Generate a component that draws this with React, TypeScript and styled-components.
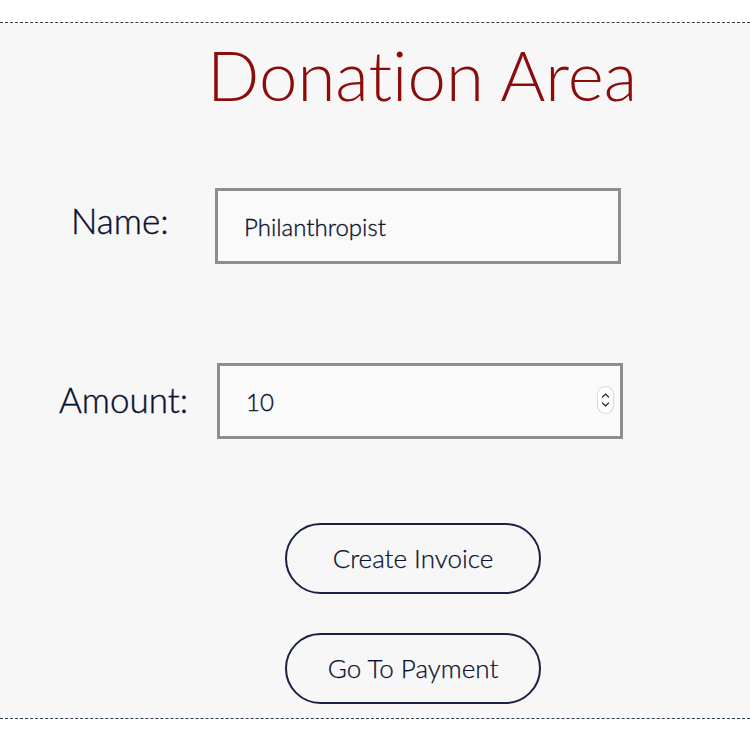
import React from "react";
import styled, { createGlobalStyle } from "styled-components";

const Global = createGlobalStyle`
  html, body { margin: 0; padding: 0; background: #ffffff; }
  body { font-family: "Lato", "Liberation Sans", sans-serif; }
  * { box-sizing: border-box; }
`;

const Section = styled.section`
  margin-top: 22px;
  height: 697px;
  background: #f7f7f7;
  border-top: 1px dashed #2f4050;
  border-bottom: 1px dashed #2f4050;
  display: flex;
  flex-direction: column;
`;

const Title = styled.h1`
  margin: 7px 0 0 207px;
  font-family: "Lato", sans-serif;
  font-weight: 300;
  font-size: 69px;
  line-height: 90px;
  color: #8c0c0c;
  font-variant-ligatures: none;
  font-feature-settings: "liga" 0;
`;

const Row = styled.div<{ $top: number }>`
  display: flex;
  align-items: center;
  margin-top: ${(p) => p.$top}px;
  height: 76px;
`;

const Label = styled.label<{ $left: number; $width: number; $lift: number }>`
  margin-left: ${(p) => p.$left}px;
  width: ${(p) => p.$width}px;
  font-family: "Lato", sans-serif;
  font-size: 35px;
  font-weight: 300;
  color: #0b1033;
  padding-bottom: ${(p) => p.$lift}px;
  -webkit-text-stroke: 0.4px #0b1033;
`;

const Field = styled.div`
  position: relative;
  width: 406px;
  height: 76px;
`;

const Input = styled.input`
  width: 100%;
  height: 100%;
  border: 3px solid #8e8e8e;
  background: #fafafa;
  padding: 0 0 0 26px;
  font-family: "Lato", sans-serif;
  font-size: 24px;
  font-weight: 300;
  color: #0b1030;
  -webkit-text-stroke: 0.35px #0b1030;
  outline: none;
  appearance: textfield;
  -moz-appearance: textfield;
  &::-webkit-outer-spin-button,
  &::-webkit-inner-spin-button {
    -webkit-appearance: none;
    margin: 0;
  }
`;

const Spinner = styled.div`
  position: absolute;
  right: 10px;
  top: 24px;
  width: 15px;
  height: 26px;
  border-radius: 8px;
  background: #ffffff;
  box-shadow: 0 0 0 1px #d8d8d8;
  display: flex;
  align-items: center;
  justify-content: center;
`;

const Buttons = styled.div`
  display: flex;
  flex-direction: column;
  align-items: flex-start;
  margin-left: 285px;
  margin-top: 84px;
  gap: 39px;
`;

const PillButton = styled.button`
  width: 256px;
  height: 71px;
  border-radius: 36px;
  border: 2px solid #1a2142;
  background: #f7f7f7;
  font-family: "Lato", sans-serif;
  font-size: 26px;
  font-weight: 300;
  color: #0b1030;
  -webkit-text-stroke: 0.25px #0b1030;
  padding: 0 0 2px 0;
  cursor: pointer;
`;

export default function App() {
  return (
    <>
      <Global />
      <Section>
        <Title>Donation Area</Title>
        <Row $top={68}>
          <Label $left={71} $width={144} $lift={12}>Name:</Label>
          <Field>
            <Input type="text" defaultValue="Philanthropist" />
          </Field>
        </Row>
        <Row $top={99}>
          <Label $left={59} $width={158} $lift={4}>Amount:</Label>
          <Field>
            <Input type="number" defaultValue={10} />
            <Spinner>
              <svg width="9" height="18" viewBox="0 0 9 18" fill="none" stroke="#333" strokeWidth="1.3" strokeLinecap="round" strokeLinejoin="round">
                <path d="M1.5 6 L4.5 3 L7.5 6" />
                <path d="M1.5 12 L4.5 15 L7.5 12" />
              </svg>
            </Spinner>
          </Field>
        </Row>
        <Buttons>
          <PillButton type="button">Create Invoice</PillButton>
          <PillButton type="button">Go To Payment</PillButton>
        </Buttons>
      </Section>
    </>
  );
}
